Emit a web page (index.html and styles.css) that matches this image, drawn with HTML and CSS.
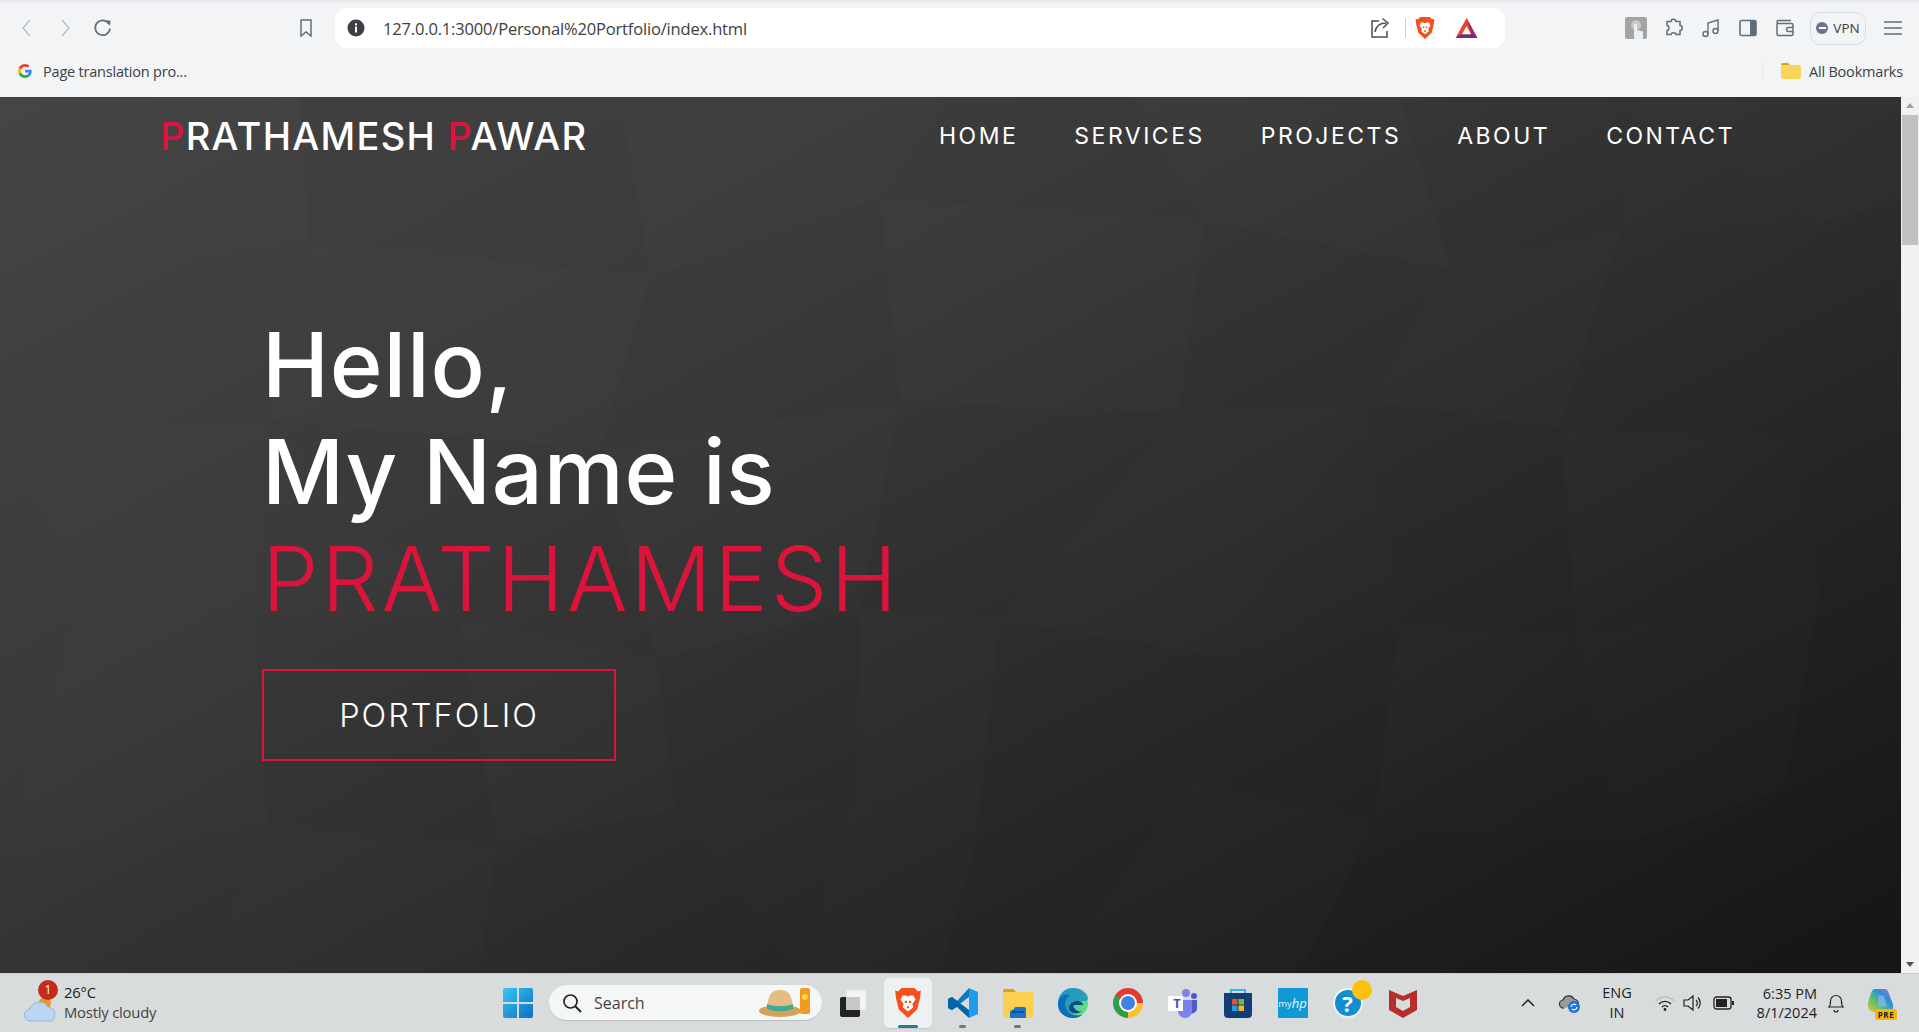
FILE: index.html
```html
<!DOCTYPE html>
<html lang="en">
<head>
    <meta charset="UTF-8">
    <title>Personal Portfolio</title>
    <link rel="stylesheet" href="styles.css">
</head>
<body>
    <!-- browser toolbar -->
    <div class="toolbar">
        <div class="nav-btns">
            <svg class="ic" viewBox="0 0 20 20"><path d="M13 2 6 10l7 8" fill="none" stroke="#b9c0c6" stroke-width="1.5"/></svg>
            <svg class="ic" viewBox="0 0 20 20"><path d="m7 2 7 8-7 8" fill="none" stroke="#b9c0c6" stroke-width="1.5"/></svg>
            <svg class="ic" viewBox="0 0 20 20"><path d="M16 6a7.4 7.4 0 1 0 1 4.5" fill="none" stroke="#5f6f7b" stroke-width="1.7"/><path d="M12.5 2.5h5L17 7.800z" fill="#5f6f7b"/></svg>
        </div>
        <svg class="ic bookmark" viewBox="0 0 20 20"><path d="M5 2h10v16l-5-4-5 4z" fill="none" stroke="#5f6f7b" stroke-width="1.5"/></svg>
        <div class="urlbar">
            <svg class="info" viewBox="0 0 18 18"><circle cx="9" cy="9" r="8.5" fill="#3c3f43"/><rect x="8" y="7.5" width="2" height="6" fill="#fff"/><rect x="8" y="4.3" width="2" height="2" fill="#fff"/></svg>
            <span class="url">127.0.0.1:3000/Personal%20Portfolio/index.html</span>
            <svg class="ic share" viewBox="0 0 22 22"><path d="M9 4H2v16h15v-6" fill="none" stroke="#4a4f55" stroke-width="1.5"/><path d="M5 15c1-6 5-9 11-9M12.5 1.5 18 6l-5 5" fill="none" stroke="#4a4f55" stroke-width="1.5"/></svg>
            <span class="divider"></span>
            <svg class="brave-small" viewBox="0 0 24 28"><path d="M6 0h12l3 3 3-.5-1 8-2.5 9.5L12 28l-8.500-8L1 10.500 0 2.500 3 3z" fill="#f4501e"/><path d="M7 7h3l2 1 2-1h3l2 4-3 4 1 3-5 4-5-4 1-3-3-4z" fill="#fff"/><path d="M9 12h2v2H9zM13 12h2v2h-2zM11 17h2v2h-2z" fill="#f4501e"/></svg>
            <svg class="bat" viewBox="0 0 24 22"><path d="M12 0 24 22H0z" fill="#e8452c"/><path d="M12 0 24 22l-6-3z" fill="#8e2a7d"/><path d="M0 22h24l-6-4H6z" fill="#66308f"/><path d="M12 9 17 18H7z" fill="#fff"/></svg>
        </div>
        <div class="ext-icons">
            <svg class="avatar" viewBox="0 0 22 22"><rect width="22" height="22" rx="2" fill="#a3a3a3"/><circle cx="11" cy="8" r="5" fill="#c9c9c9"/><path d="M9 22V8a1.5 1.5 0 0 1 3 0v5l6 1.500V22z" fill="#e9f0f7"/></svg>
            <svg class="ic" viewBox="0 0 20 20"><path d="M7 3.500c0-3 5-3 5 0h4v4c3 0 3 5 0 5v4h-4c0-2.500-5-2.500-5 0H3v-4c2.500 0 2.500-5 0-5v-4z" fill="none" stroke="#5f6f7b" stroke-width="1.5"/></svg>
            <svg class="ic" viewBox="0 0 20 20"><path d="M7 16V5l10-3v11" fill="none" stroke="#5f6f7b" stroke-width="1.4"/><circle cx="4.5" cy="16" r="2.5" fill="none" stroke="#5f6f7b" stroke-width="1.4"/><circle cx="14.5" cy="13" r="2.5" fill="none" stroke="#5f6f7b" stroke-width="1.4"/></svg>
            <svg class="ic" viewBox="0 0 20 20"><rect x="2" y="2.5" width="16" height="15" rx="1.5" fill="none" stroke="#5f6f7b" stroke-width="1.6"/><rect x="12" y="2.5" width="6" height="15" fill="#5f6f7b"/></svg>
            <svg class="ic" viewBox="0 0 20 20"><path d="M2 5.500V16a1.500 1.500 0 0 0 1.500 1.500h13A1.500 1.500 0 0 0 18 16V7a1.500 1.500 0 0 0-1.500-1.500h-13A1.500 1.500 0 0 1 2 4a1.500 1.500 0 0 1 1.500-1.500H16" fill="none" stroke="#5f6f7b" stroke-width="1.5"/><path d="M18 9.500h-4.500a2 2 0 0 0 0 4H18" fill="none" stroke="#5f6f7b" stroke-width="1.5"/></svg>
            <div class="vpn"><span class="vpn-dot"></span>VPN</div>
            <svg class="ic" viewBox="0 0 20 20"><path d="M1 4h18M1 10h18M1 16h18" stroke="#5f6f7b" stroke-width="1.5"/></svg>
        </div>
    </div>

    <!-- bookmarks bar -->
    <div class="bookmarks">
        <svg class="g-logo" viewBox="0 0 48 48">
            <path fill="#EA4335" d="M24 9.500c3.540 0 6.710 1.220 9.210 3.600l6.850-6.850C35.900 2.380 30.470 0 24 0 14.620 0 6.510 5.380 2.560 13.220l7.980 6.190C12.430 13.720 17.740 9.500 24 9.500z"/>
            <path fill="#4285F4" d="M46.980 24.550c0-1.570-.15-3.090-.38-4.550H24v9.020h12.940c-.58 2.960-2.260 5.480-4.780 7.180l7.730 6c4.510-4.180 7.090-10.360 7.090-17.650z"/>
            <path fill="#FBBC05" d="M10.530 28.590c-.48-1.450-.76-2.990-.76-4.590s.27-3.140.76-4.590l-7.980-6.190C.92 16.460 0 20.120 0 24c0 3.880.92 7.540 2.560 10.780l7.970-6.190z"/>
            <path fill="#34A853" d="M24 48c6.480 0 11.930-2.130 15.890-5.810l-7.730-6c-2.150 1.450-4.920 2.300-8.160 2.300-6.260 0-11.570-4.220-13.470-9.910l-7.980 6.190C6.510 42.620 14.620 48 24 48z"/>
        </svg>
        <span>Page translation pro...</span>
        <span class="spacer"></span>
        <span class="bm-sep"></span>
        <svg class="folder-small" viewBox="0 0 20 16"><path d="M0 2a2 2 0 0 1 2-2h5l2 2H0z" fill="#d9a21b"/><rect y="2" width="20" height="14" rx="2" fill="#fbd55b"/></svg>
        <span>All Bookmarks</span>
    </div>

    <!-- page -->
    <div class="viewport">
        <main class="hero">
            <svg class="facets" viewBox="0 0 1901 876" preserveAspectRatio="none">
                <g fill="#fff" fill-opacity=".008">
                    <polygon points="0,0 300,0 310,143 0,183"/>
                    <polygon points="620,0 950,0 880,101 650,180"/>
                    <polygon points="1130,0 1400,0 1451,172 1205,124"/>
                    <polygon points="1640,0 1901,0 1901,103 1820,127"/>
                    <polygon points="310,143 650,180 600,353 270,323"/>
                    <polygon points="880,101 1205,124 1179,318 900,303"/>
                    <polygon points="1451,172 1621,133 1560,332 1366,304"/>
                    <polygon points="0,333 270,323 255,517 83,494"/>
                    <polygon points="600,353 900,303 861,511 657,562"/>
                    <polygon points="1179,318 1366,304 1223,560 1000,523"/>
                    <polygon points="1560,332 1785,341 1577,540"/>
                    <polygon points="83,494 255,517 268,730 0,760"/>
                    <polygon points="459,522 657,562 676,713 497,747"/>
                    <polygon points="861,511 1000,523 976,747 855,697"/>
                    <polygon points="1399,526 1577,540 1375,723"/>
                    <polygon points="1577,540 1821,487 1785,692 1621,748"/>
                    <polygon points="268,730 497,747 480,876 200,876"/>
                    <polygon points="855,697 976,747 940,876 800,876"/>
                    <polygon points="1193,686 1375,723 1300,876 1070,846"/>
                </g>
                <g fill="#000" fill-opacity=".016">
                    <polygon points="300,0 620,0 650,180 310,143"/>
                    <polygon points="950,0 1130,0 1205,124 880,101"/>
                    <polygon points="1400,0 1640,0 1621,133 1451,172"/>
                    <polygon points="650,180 880,101 900,303 600,353"/>
                    <polygon points="1205,124 1451,172 1366,304 1179,318"/>
                    <polygon points="1621,133 1820,127 1785,341 1560,332"/>
                    <polygon points="1820,127 1901,103 1901,323 1785,341"/>
                    <polygon points="270,323 600,353 657,562 459,522"/>
                    <polygon points="900,303 1179,318 1000,523 861,511"/>
                    <polygon points="1366,304 1560,332 1577,540 1399,526"/>
                    <polygon points="1785,341 1901,323 1901,503 1821,487"/>
                    <polygon points="255,517 459,522 497,747 268,730"/>
                    <polygon points="657,562 861,511 855,697 676,713"/>
                    <polygon points="1000,523 1223,560 1193,686 976,747"/>
                    <polygon points="1223,560 1399,526 1375,723 1193,686"/>
                    <polygon points="1821,487 1901,503 1901,692 1785,692"/>
                    <polygon points="497,747 676,713 800,876 480,876"/>
                    <polygon points="976,747 1193,686 1070,846 940,876"/>
                    <polygon points="1375,723 1621,748 1560,876 1300,876"/>
                    <polygon points="1621,748 1785,692 1901,692 1901,876 1560,876"/>
                </g>
            </svg>
            <header class="site-header">
                <div class="logo"><span class="red">P</span>RATHAMESH <span class="red">P</span>AWAR</div>
                <nav class="site-nav">
                    <a href="#">HOME</a>
                    <a href="#">SERVICES</a>
                    <a href="#">PROJECTS</a>
                    <a href="#">ABOUT</a>
                    <a href="#">CONTACT</a>
                </nav>
            </header>
            <section class="intro">
                <h1>Hello,<br>My Name is<br><span class="name">PRATHAMESH</span></h1>
                <a class="btn" href="#">PORTFOLIO</a>
            </section>
        </main>
        <div class="scrollbar">
            <span class="arrow up"></span>
            <span class="thumb"></span>
            <span class="arrow down"></span>
        </div>
    </div>

    <!-- windows taskbar -->
    <footer class="taskbar">
        <div class="weather">
            <span class="weather-ic">
                <svg viewBox="0 0 34 28"><circle cx="21" cy="8" r="6" fill="#e79a2b"/><path d="M7 26a6 6 0 0 1-1-12 10 10 0 0 1 18-2 7.500 7.500 0 0 1 3 14z" fill="#bcd6f2" stroke="#8fb4e2"/></svg>
                <span class="badge">1</span>
            </span>
            <div class="weather-text">
                <span class="temp">26°C</span>
                <span>Mostly cloudy</span>
            </div>
        </div>
        <div class="center">
            <svg class="win" viewBox="0 0 30 30">
                <defs><linearGradient id="w" x1="0" y1="0" x2="1" y2="1"><stop offset="0" stop-color="#38c6f4"/><stop offset="1" stop-color="#0a6fc4"/></linearGradient></defs>
                <path d="M0 2a2 2 0 0 1 2-2h12v14H0zM16 0h12a2 2 0 0 1 2 2v12H16zM0 16h14v14H2a2 2 0 0 1-2-2zM16 16h14v12a2 2 0 0 1-2 2H16z" fill="url(#w)"/>
            </svg>
            <div class="search">
                <svg class="search-ic" viewBox="0 0 20 20"><circle cx="8.5" cy="8.5" r="6.5" fill="none" stroke="#222" stroke-width="1.7"/><path d="m13 13 6 6" stroke="#222" stroke-width="2"/></svg>
                <span>Search</span>
                <span class="spacer"></span>
                <svg class="hat" viewBox="0 0 52 30"><ellipse cx="22" cy="23" rx="21" ry="6" fill="#d4a35a"/><path d="M9 21C10 6 14 2 22 2s12 4 13 19z" fill="#e3bd83"/><path d="M9 16c8 3 18 3 26 0v5c-8 3-18 3-26 0z" fill="#3eaa92"/><rect x="42" y="0" width="10" height="26" rx="2" fill="#f39a1f"/><circle cx="47" cy="9" r="3" fill="#ffd84d"/></svg>
            </div>
            <div class="apps">
                <div class="app">
                    <svg viewBox="0 0 30 30"><rect x="8" y="2" width="20" height="20" rx="2" fill="#f4f4f4" stroke="#e2e2e2"/><rect x="2" y="9" width="20" height="20" rx="2" fill="#222"/><rect x="8" y="9" width="14" height="13" fill="#c7c7c7"/></svg>
                </div>
                <div class="app active">
                    <svg viewBox="0 0 24 28"><path d="M6 0h12l3 3 3-.5-1 8-2.5 9.5L12 28l-8.500-8L1 10.500 0 2.500 3 3z" fill="#f4501e"/><path d="M7 7h3l2 1 2-1h3l2 4-3 4 1 3-5 4-5-4 1-3-3-4z" fill="#fff"/><path d="M9 12h2v2H9zM13 12h2v2h-2zM11 17h2v2h-2z" fill="#f4501e"/></svg>
                    <span class="running wide"></span>
                </div>
                <div class="app">
                    <svg viewBox="0 0 30 30"><path d="M21 0 30 4v22l-9 4V0z" fill="#1f9cf0"/><path d="M21 0v9L9 18l-5 4-4-2V11l4-2 5 4z" fill="#0b78c4"/><path d="M0 11 4 9 21 22v8L9 19l-5 3-4-2z" fill="#0065a9"/></svg>
                    <span class="running"></span>
                </div>
                <div class="app">
                    <svg viewBox="0 0 30 30"><path d="M0 3a2 2 0 0 1 2-2h8l3 3H0z" fill="#d6a018"/><path d="M0 4h30v26H0z" fill="#fcd04f"/><path d="M11 21a2 2 0 0 1 2-2h8a2 2 0 0 1 2 2v9H7v-7z" fill="#1a75c9"/><rect x="9" y="23" width="12" height="2" fill="#0d4f91"/></svg>
                    <span class="running"></span>
                </div>
                <div class="app">
                    <svg viewBox="0 0 30 30">
                        <defs><linearGradient id="e" x1="0" y1="0" x2="1" y2="1"><stop offset="0" stop-color="#2bc4d6"/><stop offset="1" stop-color="#6be06a"/></linearGradient></defs>
                        <circle cx="15" cy="15" r="15" fill="url(#e)"/>
                        <path d="M15 0A15 15 0 0 0 0 15c0 9 7 15 15 15 4 0 7-1 9-3-7 2-13-1-13-7 0-4 4-7 8-7 5 0 11 1 11-3C30 5 23 0 15 0z" fill="#0f7bc8" fill-opacity=".6"/>
                        <path d="M0 17c0-8 7-12 12-10-3 2-5 5-5 9 0 7 6 13 17 11-3 2-6 3-9 3C7 30 0 24 0 17z" fill="#0c6db8"/>
                        <path d="M11 20c0-4 4-7 8-7 4 0 6 2 6 4H17c-2 0-2 2 0 4 2 2 5 3 7 2-5 4-13 3-13-3z" fill="#114a8b"/>
                    </svg>
                </div>
                <div class="app"><span class="chrome"></span></div>
                <div class="app">
                    <svg viewBox="0 0 30 30"><circle cx="18" cy="5" r="4" fill="#7b83eb"/><circle cx="26" cy="8" r="3" fill="#5059c9"/><path d="M22 12h7v9a5 5 0 0 1-7 4z" fill="#5059c9"/><path d="M10 12h14v11a7 7 0 0 1-14 0z" fill="#7b83eb"/><rect y="8" width="15" height="15" fill="#fff"/></svg>
                    <span class="teams-t">T</span>
                </div>
                <div class="app">
                    <svg viewBox="0 0 30 30"><path d="M8 7V2h14v5" fill="none" stroke="#2bb8e8" stroke-width="2"/><path d="M1 5h28v21a4 4 0 0 1-4 4H5a4 4 0 0 1-4-4z" fill="#123e75"/><rect x="9" y="11" width="5.5" height="5.5" fill="#e8542a"/><rect x="15.5" y="11" width="5.5" height="5.5" fill="#7eb733"/><rect x="9" y="17.5" width="5.5" height="5.5" fill="#1ba4ea"/><rect x="15.5" y="17.5" width="5.5" height="5.5" fill="#fdb813"/></svg>
                </div>
                <div class="app"><span class="myhp">my<i>hp</i></span></div>
                <div class="app">
                    <span class="help">?</span>
                    <span class="help-dot"></span>
                </div>
                <div class="app">
                    <svg viewBox="0 0 30 30"><path d="M1 2 15 8 29 2v20l-14 8-14-8z" fill="#b5302b"/><path d="M8 10l7 3 7-3v9l-7 4-7-4z" fill="#d9dcdd"/></svg>
                </div>
            </div>
        </div>
        <div class="tray">
            <svg class="chev" viewBox="0 0 14 8"><path d="m1 7 6-6 6 6" fill="none" stroke="#222" stroke-width="1.5"/></svg>
            <svg class="onedrive" viewBox="0 0 22 20"><path d="M5 15a4 4 0 0 1-1-8 6 6 0 0 1 11-1 4.500 4.500 0 0 1 4 6" fill="#9a9a9a" stroke="#333" stroke-width="1.2"/><circle cx="15" cy="14" r="6" fill="#1b74d8"/><path d="M12 14a3 3 0 0 1 5-2M18 14a3 3 0 0 1-5 2" fill="none" stroke="#fff" stroke-width="1.2"/></svg>
            <div class="lang">ENG<br>IN</div>
            <svg class="wifi" viewBox="0 0 20 16"><path d="M1 6a12 12 0 0 1 18 0" fill="none" stroke="#bbb" stroke-width="1.3"/><path d="M4 9a8 8 0 0 1 12 0M7 12a4 4 0 0 1 6 0" fill="none" stroke="#222" stroke-width="1.3"/><circle cx="10" cy="14.5" r="1.4" fill="#222"/></svg>
            <svg class="vol" viewBox="0 0 20 18"><path d="M1 6h4l5-4v14l-5-4H1z" fill="none" stroke="#222" stroke-width="1.2"/><path d="M13 6a4 4 0 0 1 0 6M15 3.500a8 8 0 0 1 0 11" fill="none" stroke="#222" stroke-width="1.2"/></svg>
            <svg class="batt" viewBox="0 0 22 14"><rect x="1" y="1" width="17" height="12" rx="2.5" fill="none" stroke="#222" stroke-width="1.3"/><rect x="3" y="3" width="11" height="8" fill="#222"/><rect x="19" y="5" width="2" height="4" fill="#222"/></svg>
            <div class="clock">6:35 PM<br>8/1/2024</div>
            <svg class="bell" viewBox="0 0 18 20"><path d="M2 14c1.500-1.500 1.500-3 1.500-6a5.500 5.500 0 0 1 11 0c0 3 0 4.500 1.500 6z" fill="none" stroke="#222" stroke-width="1.2"/><path d="M7 17a2 2 0 0 0 4 0" fill="none" stroke="#222" stroke-width="1.2"/></svg>
            <div class="copilot">
                <svg viewBox="0 0 30 28">
                    <defs><linearGradient id="c" x1="0" y1="1" x2="1" y2="0"><stop offset="0" stop-color="#f0c030"/><stop offset=".35" stop-color="#5fc06a"/><stop offset=".65" stop-color="#2b8fe0"/><stop offset="1" stop-color="#c95fd0"/></linearGradient></defs>
                    <path d="M9 1h10c3 0 4 3 5 6l4 11c1 4-2 8-6 8H11C6 26 1 24 1 19c0-6 3-12 4-15 .6-2 2-3 4-3z" fill="url(#c)"/>
                    <path d="M12 8h6l3 12h-9z" fill="#8fb8f0" fill-opacity=".7"/>
                </svg>
                <span class="pre">PRE</span>
            </div>
        </div>
    </footer>
</body>
</html>
```

FILE: styles.css
```css
* {
    box-sizing: border-box;
}
html, body {
    height: 100%;
}
body {
    margin: 0;
    display: flex;
    flex-direction: column;
    overflow: hidden;
    font-family: "Open Sans", "Noto Sans", sans-serif;
    background-color: #f3f4f6;
}
svg {
    display: block;
    flex: none;
}
.spacer {
    flex: 1;
}
.ic {
    width: 20px;
    height: 20px;
}

/* toolbar */
.toolbar {
    height: 51px;
    flex: none;
    display: flex;
    align-items: center;
    padding-top: 2px;
    border-top: 3px solid #e9ebee;
    background-color: #f3f4f6;
}
.nav-btns {
    display: flex;
    gap: 18px;
    margin-left: 17px;
}
.bookmark {
    margin-left: 183px;
}
.urlbar {
    width: 1170px;
    height: 40px;
    margin-left: 19px;
    display: flex;
    align-items: center;
    background-color: #fff;
    border-radius: 12px;
    padding: 0 27px 0 12px;
}
.info {
    width: 18px;
    height: 18px;
}
.url {
    margin-left: 18px;
    font-size: 16.5px;
    letter-spacing: -0.17px;
    color: #3c4043;
    flex: 1;
}
.share {
    width: 22px;
    height: 22px;
}
.divider {
    width: 1px;
    height: 20px;
    margin: 0 9px 0 13px;
    background-color: #cfd2d5;
}
.brave-small {
    width: 20px;
    height: 22px;
}
.bat {
    width: 23px;
    height: 20px;
    margin-left: 20px;
}
.ext-icons {
    display: flex;
    align-items: center;
    margin-left: 120px;
    gap: 17px;
}
.avatar {
    width: 22px;
    height: 22px;
}
.vpn {
    width: 56px;
    height: 33px;
    margin-left: -2px;
    display: flex;
    align-items: center;
    justify-content: center;
    gap: 5px;
    border: 1px solid #d8dee6;
    border-radius: 10px;
    font-size: 13.5px;
    color: #3c4043;
}
.vpn-dot {
    width: 12px;
    height: 12px;
    border-radius: 50%;
    background: linear-gradient(#fff, #fff) center / 7px 2px no-repeat, #6b7390;
}

/* bookmarks */
.bookmarks {
    height: 46px;
    flex: none;
    display: flex;
    align-items: center;
    padding: 0 16px 6px 18px;
    font-size: 14.5px;
    letter-spacing: -0.2px;
    color: #3c4043;
    background-color: #f3f4f6;
}
.g-logo {
    width: 14px;
    height: 14px;
    margin-right: 11px;
}
.bm-sep {
    width: 1px;
    height: 20px;
    margin-right: 18px;
    background-color: #e6e8eb;
}
.folder-small {
    width: 20px;
    height: 16px;
    margin-right: 8px;
}

/* page */
.viewport {
    flex: 1;
    display: flex;
    min-height: 0;
}
.hero {
    position: relative;
    flex: 1;
    overflow: hidden;
    padding: 0 166px 0 160px;
    color: #fff;
    font-family: Inter, "Liberation Sans", sans-serif;
    background: linear-gradient(152deg, #444 0%, #3a3a3a 35%, #2b2b2b 62%, #161616 100%);
}
.facets {
    position: absolute;
    top: 0;
    left: 0;
    width: 100%;
    height: 100%;
}
.site-header {
    position: relative;
    height: 78px;
    display: flex;
    align-items: center;
    justify-content: space-between;
}
.logo {
    font-size: 38px;
    font-weight: 500;
    letter-spacing: 1.3px;
    white-space: pre;
}
.red {
    color: #dc143c;
}
.site-nav {
    display: flex;
    gap: 56px;
}
.site-nav a {
    font-size: 23px;
    letter-spacing: 2.5px;
    color: #fff;
    text-decoration: none;
}
.intro {
    position: relative;
    margin: 0;
    padding: 136px 0 0 102px;
}
h1 {
    margin: 0;
    font-size: 90px;
    font-weight: 500;
    line-height: 107px;
    letter-spacing: 0.8px;
}
.name {
    font-weight: 300;
    color: #dc143c;
    letter-spacing: 2.9px;
}
.btn {
    display: flex;
    align-items: center;
    justify-content: center;
    width: 354px;
    height: 92px;
    margin-top: 37px;
    border: 2px solid #dc143c;
    font-size: 32.5px;
    font-weight: 300;
    letter-spacing: 2px;
    color: #fff;
    text-decoration: none;
}
.scrollbar {
    width: 18px;
    flex: none;
    display: flex;
    flex-direction: column;
    align-items: center;
    background-color: #f1f1f1;
}
.thumb {
    width: 16px;
    height: 130px;
    margin-top: 7px;
    background-color: #c1c1c1;
}
.arrow {
    width: 0;
    height: 0;
    border-left: 4px solid transparent;
    border-right: 4px solid transparent;
}
.arrow.up {
    margin-top: 6px;
    border-bottom: 5px solid #a0a0a0;
}
.arrow.down {
    margin-top: auto;
    margin-bottom: 6px;
    border-top: 5px solid #505050;
}

/* taskbar */
.taskbar {
    height: 59px;
    flex: none;
    display: flex;
    align-items: center;
    border-top: 1px solid #c9cccd;
    background-color: #d9dcdd;
    color: #1c1c1c;
}
.weather {
    width: 503px;
    flex: none;
    display: flex;
    align-items: center;
    padding-left: 24px;
}
.weather-ic {
    position: relative;
    width: 34px;
    height: 40px;
    display: flex;
    align-items: flex-end;
}
.weather-ic svg {
    width: 34px;
    height: 28px;
}
.badge {
    position: absolute;
    top: -3px;
    left: 14px;
    width: 20px;
    height: 20px;
    border-radius: 50%;
    background-color: #c42b1c;
    color: #fff;
    font-size: 12px;
    text-align: center;
    line-height: 20px;
}
.weather-text {
    display: flex;
    flex-direction: column;
    margin: -2px 0 0 6px;
    font-size: 14.8px;
    line-height: 20px;
    letter-spacing: -0.2px;
    color: #444;
}
.temp {
    color: #1c1c1c;
}
.center {
    display: flex;
    align-items: center;
}
.win {
    width: 30px;
    height: 30px;
}
.search {
    width: 273px;
    height: 36px;
    margin-left: 16px;
    display: flex;
    align-items: center;
    padding: 0 12px 0 13px;
    background-color: #f5f6f6;
    border-radius: 18px;
    border-bottom: 1px solid #bcbfc0;
    font-size: 16px;
    color: #444;
}
.search-ic {
    width: 20px;
    height: 20px;
    margin-right: 12px;
}
.hat {
    width: 52px;
    height: 30px;
}
.apps {
    display: flex;
    align-items: center;
    margin-left: 3px;
}
.app {
    position: relative;
    width: 55px;
    height: 50px;
    display: flex;
    align-items: center;
    justify-content: center;
}
.app svg {
    width: 30px;
    height: 30px;
}
.app.active {
    width: 48px;
    margin: 0 3.5px;
    background-color: #eef0f1;
    border-radius: 5px;
    box-shadow: 0 1px 1px #c4c7c8;
}
.running {
    position: absolute;
    bottom: 0;
    left: 50%;
    width: 7px;
    height: 3px;
    margin-left: -3.5px;
    border-radius: 2px;
    background-color: #737779;
}
.running.wide {
    width: 20px;
    margin-left: -10px;
    background-color: #1f7f91;
}
.chrome {
    position: relative;
    width: 30px;
    height: 30px;
    border-radius: 50%;
    background: conic-gradient(from -60deg, #e33b2e 0 150deg, #fbc02d 150deg 240deg, #2f9e44 240deg 360deg);
}
.chrome::after {
    content: "";
    position: absolute;
    top: 8px;
    left: 8px;
    width: 14px;
    height: 14px;
    border-radius: 50%;
    background-color: #3f7fe8;
    box-shadow: 0 0 0 2px #fff;
}
.teams-t {
    position: absolute;
    top: 17px;
    left: 15px;
    width: 14px;
    font-size: 13px;
    font-weight: 700;
    line-height: 16px;
    text-align: center;
    color: #4b53bc;
}
.myhp {
    width: 30px;
    height: 30px;
    display: flex;
    align-items: center;
    justify-content: center;
    background-color: #0f9ad6;
    border-radius: 1px;
    color: #e8f4fb;
    font-size: 9.5px;
}
.myhp i {
    font-size: 13px;
}
.help {
    width: 30px;
    height: 30px;
    border-radius: 50%;
    border: 2px solid #eef3f5;
    background-color: #0f8fd0;
    color: #fff;
    font-size: 22px;
    font-weight: 700;
    line-height: 26px;
    text-align: center;
}
.help-dot {
    position: absolute;
    top: 2px;
    left: 32px;
    width: 20px;
    height: 20px;
    border-radius: 50%;
    background-color: #fcc10f;
}
.tray {
    display: flex;
    align-items: center;
    font-size: 14.5px;
    color: #222;
}
.chev {
    width: 14px;
    height: 8px;
    margin-left: 91px;
}
.onedrive {
    width: 22px;
    height: 20px;
    margin-left: 24px;
}
.lang {
    width: 40px;
    margin-left: 16px;
    text-align: center;
    line-height: 20px;
}
.wifi {
    width: 20px;
    height: 16px;
    margin-left: 18px;
}
.vol {
    width: 20px;
    height: 18px;
    margin-left: 8px;
}
.batt {
    width: 22px;
    height: 14px;
    margin-left: 10px;
}
.clock {
    width: 82px;
    text-align: right;
    line-height: 19px;
}
.bell {
    width: 18px;
    height: 20px;
    margin-left: 10px;
}
.copilot {
    position: relative;
    width: 30px;
    height: 30px;
    margin-left: 22px;
}
.copilot svg {
    width: 28px;
    height: 26px;
}
.pre {
    position: absolute;
    right: 0;
    bottom: -2px;
    width: 22px;
    height: 11px;
    border-radius: 2px;
    background-color: #f5b50f;
    font-size: 8px;
    font-weight: 700;
    line-height: 11px;
    text-align: center;
    letter-spacing: 0.5px;
}
```
